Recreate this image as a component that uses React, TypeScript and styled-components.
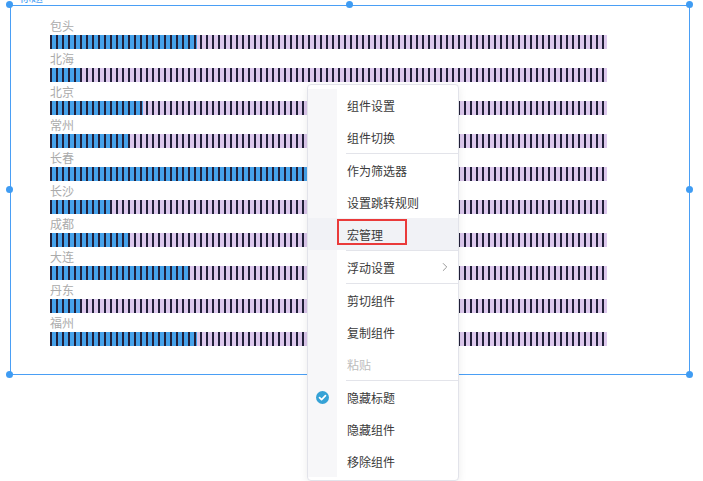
import React from "react";
import styled, { createGlobalStyle } from "styled-components";
import { ChevronRight } from "lucide-react";

const Global = createGlobalStyle`
  html, body { margin: 0; padding: 0; background: #fff; overflow: hidden; }
  body { width: 703px; height: 481px; font-family: "Noto Sans CJK SC", "Noto Sans", sans-serif; }
`;

const Page = styled.div`
  position: relative;
  width: 703px;
  height: 481px;
  padding: 5px 0 0 10px;
  box-sizing: border-box;
`;

const Widget = styled.div`
  position: relative;
  width: 680px;
  height: 370px;
  border: 1px solid #4a9ff5;
  box-sizing: border-box;
  padding: 10px 0 0 39px;
  display: flex;
  flex-direction: column;
`;

const Title = styled.div`
  position: absolute;
  left: 8px;
  top: -15px;
  font-size: 12px;
  line-height: 12px;
  color: #4a9ff5;
`;

const Handle = styled.span<{ $x: string; $y: string }>`
  position: absolute;
  width: 7px;
  height: 7px;
  border-radius: 50%;
  background: #3f9cf3;
  left: calc(${(p) => p.$x} - 4px);
  top: calc(${(p) => p.$y} - 4px);
`;

const Row = styled.div`
  display: flex;
  flex-direction: column;
  width: 557px;
`;

const Label = styled.div`
  height: 19px;
  line-height: 19px;
  font-size: 12px;
  color: #ababab;
`;

const Bar = styled.div`
  position: relative;
  height: 14px;
  background: #dcc8ec;
  overflow: hidden;
  &::after {
    content: "";
    position: absolute;
    inset: 0;
    background: repeating-linear-gradient(
      to right,
      #22203a 0px,
      #22203a 2.3px,
      transparent 2.3px,
      transparent 6px
    );
  }
`;

const Fill = styled.div`
  height: 100%;
  background: #46a2ea;
`;

const Menu = styled.div`
  position: absolute;
  left: 307px;
  top: 84px;
  width: 152px;
  box-sizing: border-box;
  background: #fff;
  border: 1px solid #e2e3ea;
  border-radius: 4px;
  box-shadow: 0 2px 8px rgba(0, 0, 0, 0.08);
  padding: 4px 0 3px;
  font-size: 12px;
  color: #3a3a3a;
`;

const Item = styled.div<{ $hover?: boolean; $disabled?: boolean }>`
  display: flex;
  align-items: stretch;
  height: 32px;
  background: ${(p) => (p.$hover ? "#f1f2f6" : "transparent")};
  color: ${(p) => (p.$disabled ? "#bdbdbd" : "#3a3a3a")};
`;

const IconCell = styled.div<{ $hover?: boolean }>`
  width: 29px;
  flex: none;
  display: flex;
  align-items: center;
  justify-content: center;
  background: ${(p) => (p.$hover ? "#f1f2f6" : "#f7f7f9")};
`;

const Text = styled.div`
  position: relative;
  flex: 1;
  display: flex;
  align-items: center;
  justify-content: space-between;
  padding: 0 6px 0 10px;
  color: inherit;
`;

const Divider = styled.div`
  display: flex;
  height: 1px;
`;

const Line = styled.div`
  flex: 1;
  margin-left: 9px;
  background: #e3e4ea;
`;

const Highlight = styled.span`
  position: absolute;
  left: 0;
  top: 1px;
  width: 70px;
  height: 26px;
  border: 2px solid #ea3a3a;
  box-sizing: border-box;
`;

const Check = () => (
  <svg width="13" height="13" viewBox="0 0 14 14">
    <circle cx="7" cy="7" r="7" fill="#36a2d6" />
    <path d="M3.8 7.2 L6 9.3 L10.2 4.9" stroke="#fff" strokeWidth="1.8" fill="none" strokeLinecap="round" strokeLinejoin="round" />
  </svg>
);

const data: [string, number][] = [
  ["包头", 147],
  ["北海", 30],
  ["北京", 93],
  ["常州", 78],
  ["长春", 300],
  ["长沙", 60],
  ["成都", 78],
  ["大连", 138],
  ["丹东", 30],
  ["福州", 147],
];

type MenuEntry =
  | { kind: "item"; text: string; hover?: boolean; disabled?: boolean; checked?: boolean; sub?: boolean; mark?: boolean }
  | { kind: "div" };

const menu: MenuEntry[] = [
  { kind: "item", text: "组件设置" },
  { kind: "item", text: "组件切换" },
  { kind: "div" },
  { kind: "item", text: "作为筛选器" },
  { kind: "item", text: "设置跳转规则" },
  { kind: "item", text: "宏管理", hover: true, mark: true },
  { kind: "div" },
  { kind: "item", text: "浮动设置", sub: true },
  { kind: "div" },
  { kind: "item", text: "剪切组件" },
  { kind: "item", text: "复制组件" },
  { kind: "item", text: "粘贴", disabled: true },
  { kind: "div" },
  { kind: "item", text: "隐藏标题", checked: true },
  { kind: "item", text: "隐藏组件" },
  { kind: "item", text: "移除组件" },
];

export default function App() {
  return (
    <Page>
      <Global />
      <Widget>
        <Title>标题</Title>
        {data.map(([name, w]) => (
          <Row key={name}>
            <Label>{name}</Label>
            <Bar>
              <Fill style={{ width: w }} />
            </Bar>
          </Row>
        ))}
        <Handle $x="-1px" $y="-1px" />
        <Handle $x="50%" $y="-1px" />
        <Handle $x="calc(100% + 1px)" $y="-1px" />
        <Handle $x="-1px" $y="50%" />
        <Handle $x="calc(100% + 1px)" $y="50%" />
        <Handle $x="-1px" $y="calc(100% + 1px)" />
        <Handle $x="50%" $y="calc(100% + 1px)" />
        <Handle $x="calc(100% + 1px)" $y="calc(100% + 1px)" />
      </Widget>
      <Menu>
        {menu.map((m, i) =>
          m.kind === "div" ? (
            <Divider key={i}>
              <IconCell />
              <Line />
            </Divider>
          ) : (
            <Item key={i} $hover={m.hover} $disabled={m.disabled}>
              <IconCell $hover={m.hover}>{m.checked && <Check />}</IconCell>
              <Text>
                <span>{m.text}</span>
                {m.sub && <ChevronRight size={14} color="#8a8a8a" strokeWidth={1.5} />}
                {m.mark && <Highlight />}
              </Text>
            </Item>
          )
        )}
      </Menu>
    </Page>
  );
}
